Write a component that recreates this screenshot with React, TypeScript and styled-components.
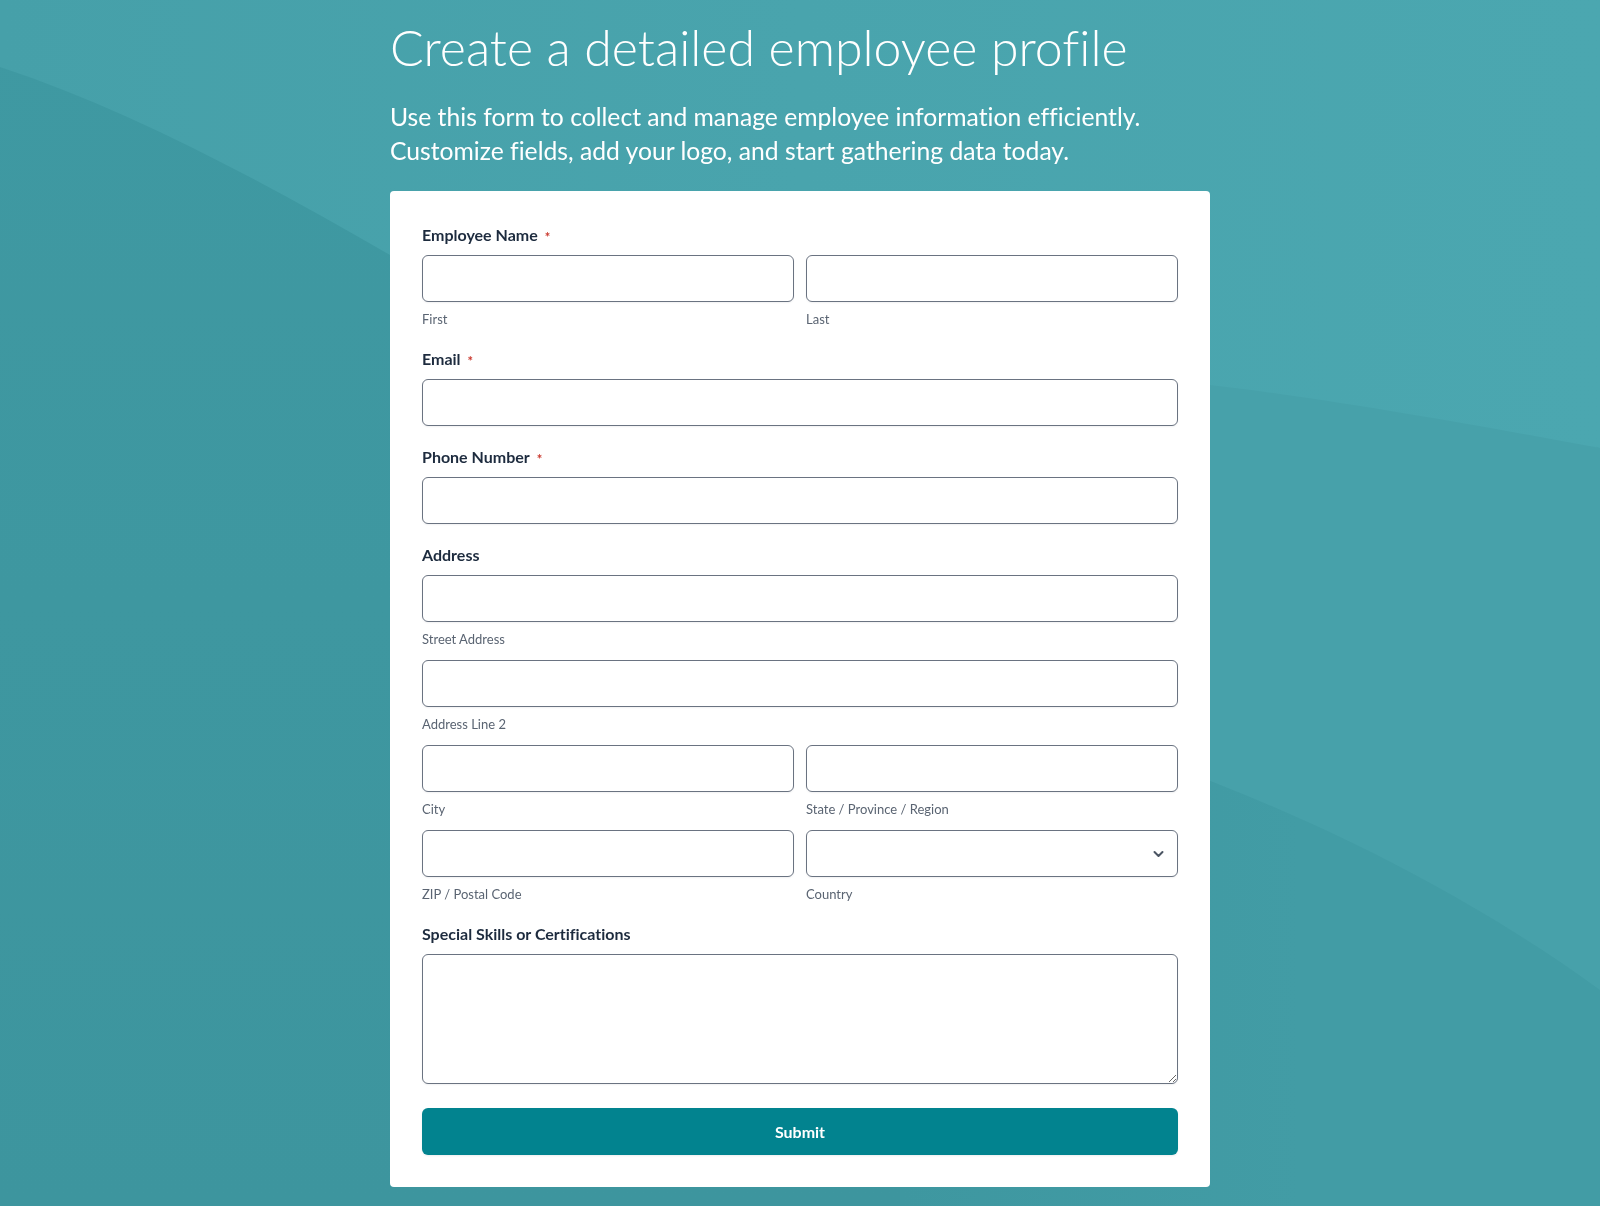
import React from "react";
import styled, { createGlobalStyle } from "styled-components";

const GlobalStyle = createGlobalStyle`
  * { box-sizing: border-box; }
  html, body { margin: 0; padding: 0; }
  body {
    background: #3e97a0;
    font-family: Lato, "Noto Sans", "Liberation Sans", sans-serif;
    font-variant-ligatures: none;
    min-height: 1206px;
  }
`;

const Backdrop = styled.svg`
  position: fixed;
  inset: 0;
  width: 100%;
  height: 100%;
  z-index: 0;
  pointer-events: none;
`;

const Page = styled.main`
  position: relative;
  z-index: 1;
  width: 820px;
  margin: 0 auto;
  padding: 17px 0 18px;
`;

const Title = styled.h1`
  margin: 0;
  font-family: Lato, "Noto Sans", sans-serif;
  font-weight: 300;
  font-size: 50px;
  line-height: 60px;
  color: #ffffff;
  letter-spacing: 0;
`;

const Intro = styled.p`
  margin: 23px 0 23px;
  font-size: 24.7px;
  line-height: 34px;
  font-weight: 400;
  color: #ffffff;
`;

const Card = styled.form`
  background: #ffffff;
  border-radius: 4px;
  padding: 32px;
  display: flex;
  flex-direction: column;
`;

const Field = styled.div`
  display: flex;
  flex-direction: column;
  margin-bottom: 19px;
`;

const Label = styled.label`
  font-size: 16px;
  line-height: 24px;
  font-weight: 700;
  color: #1d2b3e;
  margin-bottom: 8px;
  display: flex;
  align-items: center;
  gap: 7px;
`;

const Required = styled.span`
  color: #c9362b;
  font-size: 13px;
  font-weight: 700;
  line-height: 1;
  position: relative;
  top: 2px;
`;

const Parts = styled.div`
  display: flex;
  flex-direction: column;
  gap: 12px;
`;

const Row = styled.div<{ $cols?: number }>`
  display: grid;
  grid-template-columns: repeat(${(p) => p.$cols ?? 1}, 1fr);
  gap: 12px;
`;

const Part = styled.div`
  display: flex;
  flex-direction: column;
`;

const inputBase = `
  width: 100%;
  border: 1px solid #6a7381;
  border-radius: 6px;
  background: #ffffff;
  box-shadow: 0 1px 2px rgba(16, 24, 40, 0.06);
  font-family: Lato, "Noto Sans", sans-serif;
  font-size: 16px;
  color: #1d2b3e;
  outline: none;
`;

const Input = styled.input`
  ${inputBase}
  height: 47px;
  padding: 0 12px;
`;

const SelectWrap = styled.div`
  position: relative;
`;

const Select = styled.select`
  ${inputBase}
  height: 47px;
  padding: 0 36px 0 12px;
  appearance: none;
  -webkit-appearance: none;
`;

const Chevron = styled.svg`
  position: absolute;
  right: 14px;
  top: 50%;
  transform: translateY(-50%);
  pointer-events: none;
`;

const TextArea = styled.textarea`
  ${inputBase}
  height: 130px;
  padding: 10px 12px;
  resize: vertical;
  display: block;
`;

const Hint = styled.span`
  margin-top: 8px;
  font-size: 13px;
  line-height: 18px;
  color: #5a6472;
`;

const Submit = styled.button`
  margin-top: 5px;
  height: 47px;
  border: none;
  border-radius: 6px;
  background: #02838f;
  color: #ffffff;
  font-family: Lato, "Noto Sans", sans-serif;
  font-size: 16px;
  font-weight: 700;
  cursor: pointer;
  box-shadow: 0 1px 2px rgba(16, 24, 40, 0.08);
`;

const FieldLabel: React.FC<{ text: string; required?: boolean; htmlFor?: string }> = ({
  text,
  required,
  htmlFor,
}) => (
  <Label htmlFor={htmlFor}>
    {text}
    {required && <Required>*</Required>}
  </Label>
);

export default function App() {
  return (
    <>
      <GlobalStyle />
      <Backdrop viewBox="0 0 1600 1206" preserveAspectRatio="none" aria-hidden="true">
        <defs>
          <linearGradient id="topShade" x1="0" y1="0" x2="1" y2="0">
            <stop offset="0" stopColor="#46a0a9" />
            <stop offset="0.5" stopColor="#49a4ad" />
            <stop offset="1" stopColor="#4ba7b0" />
          </linearGradient>
          <linearGradient id="lowShade" x1="0" y1="0" x2="0" y2="1">
            <stop offset="0" stopColor="#3f99a2" />
            <stop offset="1" stopColor="#3d959e" />
          </linearGradient>
          <linearGradient
            id="bandShade"
            gradientUnits="userSpaceOnUse"
            x1="900"
            y1="0"
            x2="1300"
            y2="0"
          >
            <stop offset="0" stopColor="#3e97a0" />
            <stop offset="1" stopColor="#429ca5" />
          </linearGradient>
        </defs>
        <rect x="0" y="0" width="1600" height="1206" fill="url(#lowShade)" />
        <path
          d="M900,320 C1200,360 1450,410 1600,448 V1206 H900 Z"
          fill="#47a1aa"
        />
        <path
          d="M900,690 C1200,750 1450,880 1600,990 V1206 H900 Z"
          fill="url(#bandShade)"
        />
        <path
          d="M0,0 H1600 V448 C1450,420 1300,395 1210,385 C950,330 650,250 390,255 C260,180 130,110 0,67 Z"
          fill="url(#topShade)"
        />
      </Backdrop>
      <Page>
        <Title>Create a detailed employee profile</Title>
        <Intro>
          Use this form to collect and manage employee information efficiently.
          <br />
          Customize fields, add your logo, and start gathering data today.
        </Intro>
        <Card onSubmit={(e) => e.preventDefault()}>
          <Field>
            <FieldLabel text="Employee Name" required htmlFor="first" />
            <Row $cols={2}>
              <Part>
                <Input id="first" type="text" />
                <Hint>First</Hint>
              </Part>
              <Part>
                <Input id="last" type="text" />
                <Hint>Last</Hint>
              </Part>
            </Row>
          </Field>

          <Field>
            <FieldLabel text="Email" required htmlFor="email" />
            <Input id="email" type="email" />
          </Field>

          <Field>
            <FieldLabel text="Phone Number" required htmlFor="phone" />
            <Input id="phone" type="tel" />
          </Field>

          <Field>
            <FieldLabel text="Address" htmlFor="street" />
            <Parts>
              <Part>
                <Input id="street" type="text" />
                <Hint>Street Address</Hint>
              </Part>
              <Part>
                <Input id="line2" type="text" />
                <Hint>Address Line 2</Hint>
              </Part>
              <Row $cols={2}>
                <Part>
                  <Input id="city" type="text" />
                  <Hint>City</Hint>
                </Part>
                <Part>
                  <Input id="state" type="text" />
                  <Hint>State / Province / Region</Hint>
                </Part>
              </Row>
              <Row $cols={2}>
                <Part>
                  <Input id="zip" type="text" />
                  <Hint>ZIP / Postal Code</Hint>
                </Part>
                <Part>
                  <SelectWrap>
                    <Select id="country" defaultValue="">
                      <option value=""></option>
                      <option value="us">United States</option>
                      <option value="ca">Canada</option>
                    </Select>
                    <Chevron width="11" height="7" viewBox="0 0 11 7" fill="none">
                      <path
                        d="M1.5 1.5 L5.5 5.5 L9.5 1.5"
                        stroke="#4b5563"
                        strokeWidth="2"
                        strokeLinecap="round"
                        strokeLinejoin="round"
                      />
                    </Chevron>
                  </SelectWrap>
                  <Hint>Country</Hint>
                </Part>
              </Row>
            </Parts>
          </Field>

          <Field>
            <FieldLabel text="Special Skills or Certifications" htmlFor="skills" />
            <TextArea id="skills" />
          </Field>

          <Submit type="submit">Submit</Submit>
        </Card>
      </Page>
    </>
  );
}
